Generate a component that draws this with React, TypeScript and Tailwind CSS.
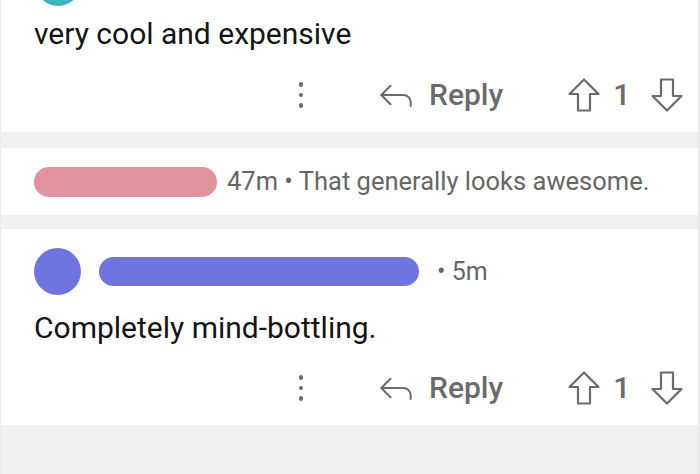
import { Reply } from "lucide-react";

// outline arrow with sharp corners, like the vote buttons
const VoteArrow = ({ down = false, className = "" }: { down?: boolean; className?: string }) => (
  <svg
    width="32"
    height="34"
    viewBox="0 0 32 34"
    fill="none"
    stroke="#6b6b6b"
    strokeWidth="2.2"
    strokeLinejoin="round"
    className={`${down ? "rotate-180" : ""} ${className}`}
  >
    <path d="M16 1.5 L30.5 16 H22 V32.5 H10 V16 H1.5 Z" />
  </svg>
);

// actions row under each comment
const Actions = () => (
  <div className="flex items-center h-[36px] text-[#6b6b6b]">
    <div className="ml-[297px] flex flex-col gap-[6px] w-[6px] items-center">
      <span className="block w-[4.5px] h-[4.5px] rounded-full bg-[#6b6b6b]" />
      <span className="block w-[4.5px] h-[4.5px] rounded-full bg-[#6b6b6b]" />
      <span className="block w-[4.5px] h-[4.5px] rounded-full bg-[#6b6b6b]" />
    </div>
    <Reply size={44} strokeWidth={1.1} className="ml-[70px]" />
    <span className="ml-[11px] text-[30px] font-medium leading-none">Reply</span>
    <VoteArrow className="ml-[65px]" />
    <span className="ml-[13px] text-[30px] font-medium leading-none">1</span>
    <VoteArrow down className="ml-[21px]" />
  </div>
);

export default function App() {
  return (
    <div
      className="w-[700px] h-[474px] overflow-hidden bg-[#eef0f1] border-l border-r-2 border-[#e8eaeb] flex flex-col"
      style={{ fontFamily: "Roboto, 'Liberation Sans', sans-serif" }}
    >
      {/* first comment, scrolled */}
      <div className="bg-white h-[132px] shrink-0 relative">
        <div className="absolute left-[34px] top-[-40px] w-[46px] h-[46px] rounded-full bg-[#3fb3bf]" />
        <p className="pl-[33px] pt-[16px] text-[30px] leading-[36px] text-[#141414]">very cool and expensive</p>
        <div className="mt-[25px]">
          <Actions />
        </div>
      </div>

      {/* collapsed comment */}
      <div className="bg-white h-[67px] mt-[16px] shrink-0 flex items-center pl-[33px]">
        <div className="w-[183px] h-[30px] rounded-full bg-[#e0939f]" />
        <span className="ml-[10px] text-[25.5px] text-[#666]">47m • That generally looks awesome.</span>
      </div>

      {/* third comment */}
      <div className="bg-white h-[196px] mt-[14px] shrink-0">
        <div className="flex items-center pl-[33px] pt-[19px]">
          <div className="w-[47px] h-[47px] rounded-full bg-[#6e74e0]" />
          <div className="ml-[18px] w-[320px] h-[29px] rounded-full bg-[#6e74e0]" />
          <span className="ml-[18px] text-[25px] text-[#666]">• 5m</span>
        </div>
        <p className="pl-[33px] pt-[15px] text-[30px] leading-[36px] text-[#141414]">Completely mind-bottling.</p>
        <div className="mt-[24px]">
          <Actions />
        </div>
      </div>
    </div>
  );
}
